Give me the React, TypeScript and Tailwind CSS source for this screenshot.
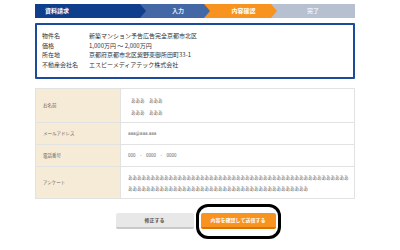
import React from "react";

const font = { fontFamily: '"Noto Sans CJK JP", "Noto Sans", sans-serif' };

function Steps() {
  const tip = "polygon(0 0, calc(100% - 6px) 0, 100% 50%, calc(100% - 6px) 100%, 0 100%)";
  return (
    <div className="flex h-[14px] w-[320px] text-[6px] font-bold leading-[14px] text-white">
      <div className="relative z-40 w-[111px] bg-[#0f3e8d] pl-[10px]" style={{ clipPath: tip }}>
        資料請求
      </div>
      <div className="relative z-30 -ml-[6px] w-[70px] bg-[#4468a6] pl-[6px] text-center text-[#e8eef8]" style={{ clipPath: tip }}>
        入力
      </div>
      <div className="relative z-20 -ml-[6px] w-[73px] bg-[#f7931e] pl-[6px] text-center" style={{ clipPath: tip }}>
        内容確認
      </div>
      <div className="relative z-10 -ml-[6px] flex-1 bg-[#b7c0d0] pr-[6px] pl-[6px] text-center text-[#eef1f6]">
        完了
      </div>
    </div>
  );
}

function Info() {
  const rows: [string, string][] = [
    ["物件名", "新築マンション予告広告完全京都市北区"],
    ["価格", "1,000万円 ～ 2,000万円"],
    ["所在地", "京都府京都市北区紫野東御所田町33-1"],
    ["不動産会社名", "エスピーメディアテック株式会社"],
  ];
  return (
    <div className="mt-[5px] w-[320px] rounded-[1px] border-2 border-[#1c4b9b] pt-[6px] pr-[5px] pb-[8px] pl-[5px] text-[6px] leading-[9.5px] text-[#333]">
      {rows.map(([k, v]) => (
        <div key={k} className="flex">
          <div className="w-[47px] shrink-0">{k}</div>
          <div>{v}</div>
        </div>
      ))}
    </div>
  );
}

function Table() {
  const a = "あああああああああああああああああああああああああああああああああああああああああああああああああ";
  const b = "ああああああああああああああああああああああああああああああああああああああああ";
  const rows: { k: string; h: string; v: React.ReactNode }[] = [
    {
      k: "お名前",
      h: "h-[33px]",
      v: (
        <div className="pl-[3px] leading-[12px]">
          <div>あああ　あああ</div>
          <div>あああ　あああ</div>
        </div>
      ),
    },
    { k: "メールアドレス", h: "h-[22px]", v: <div>aaa@aaa.aaa</div> },
    { k: "電話番号", h: "h-[22px]", v: <div>000　-　0000　-　0000</div> },
    {
      k: "アンケート",
      h: "h-[32px]",
      v: (
        <div className="leading-[11px]">
          <div className="whitespace-nowrap">{a}</div>
          <div className="whitespace-nowrap">{b}</div>
        </div>
      ),
    },
  ];
  return (
    <div className="mt-[9px] w-[320px] border border-[#e2e2e2] text-[4.5px]">
      {rows.map((r, i) => (
        <div key={r.k} className={`flex ${r.h} ${i > 0 ? "border-t border-[#e2e2e2]" : ""}`}>
          <div className="flex w-[85px] shrink-0 items-center border-r border-[#e2e2e2] bg-[#f6ebd6] pl-[7px] text-[#666]">
            {r.k}
          </div>
          <div className="flex flex-1 items-center overflow-hidden pl-[7px] text-[#666]">{r.v}</div>
        </div>
      ))}
    </div>
  );
}

export default function App() {
  return (
    <div className="h-[250px] w-[400px] bg-white" style={font}>
      <div className="flex flex-col pt-[4px] pl-[35px]">
        <Steps />
        <Info />
        <Table />
        <div className="mt-[14px] flex w-[320px] justify-center gap-[7px] pl-[1px]">
          <div className="flex h-[16px] w-[78px] items-center justify-center rounded-[2px] border-b-2 border-[#c9c9c9] bg-[#e8e8e8] text-[5px] font-bold text-[#555]">
            修正する
          </div>
          <div className="relative">
            <div className="flex h-[16px] w-[75px] items-center justify-center rounded-[2px] border-b-2 border-[#d87506] bg-[#f7931e] text-[5px] font-bold text-white">
              内容を確認して送信する
            </div>
            <div className="pointer-events-none absolute -top-[9px] -right-[5px] -bottom-[10px] -left-[5px] rounded-[12px] border-[3px] border-black" />
          </div>
        </div>
      </div>
    </div>
  );
}
